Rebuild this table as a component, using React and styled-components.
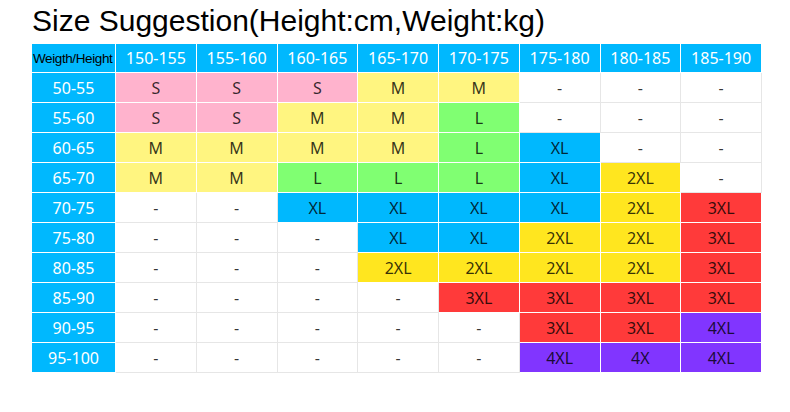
import React from "react";
import styled, { createGlobalStyle } from "styled-components";

const Global = createGlobalStyle`
  html, body { margin: 0; padding: 0; background: #fff; }
  body { width: 790px; height: 412px; overflow: hidden; }
`;

const COLORS = {
  blue: "#00b8fe",
  pink: "#ffb3cd",
  ly: "#fff580",
  green: "#80ff72",
  yellow: "#ffe61f",
  red: "#ff3a3a",
  purple: "#8135ff",
  w: "#ffffff",
};

const Page = styled.div`
  padding: 4px 0 0 32px;
`;

const Title = styled.h1`
  margin: 0;
  height: 33px;
  line-height: 33px;
  font-family: "Liberation Sans", Arial, sans-serif;
  font-weight: normal;
  font-size: 30px;
  color: #000;
  white-space: nowrap;
`;

const Table = styled.div`
  margin-top: 7px;
  width: 730px;
  display: grid;
  grid-template-columns: 84px repeat(8, 1fr);
  grid-template-rows: 29px repeat(10, 30px);
`;

const Cell = styled.div`
  box-sizing: border-box;
  display: flex;
  align-items: center;
  justify-content: center;
  background: ${(p) => COLORS[p.$tone]};
  border-right: 1px solid ${(p) => (p.$tone === "w" ? "#e6e6e6" : "#ffffff")};
  border-bottom: 1px solid ${(p) => (p.$tone === "w" ? "#e6e6e6" : "#ffffff")};
  font-family: "Noto Sans", "Noto Sans CJK SC", sans-serif;
  font-size: 16px;
  color: ${(p) => (p.$light ? "#ffffff" : "rgba(0,0,0,0.8)")};
  white-space: nowrap;
  overflow: visible;
`;

const Corner = styled(Cell)`
  font-family: "Liberation Sans", Arial, sans-serif;
  font-size: 13.5px;
  letter-spacing: -0.4px;
  color: #000;
  justify-content: flex-start;
  padding-left: 1px;
`;

const heights = ["150-155", "155-160", "160-165", "165-170", "170-175", "175-180", "180-185", "185-190"];

const rows = [
  ["50-55", "S S S M M - - -", "pink pink pink ly ly w w w"],
  ["55-60", "S S M M L - - -", "pink pink ly ly green w w w"],
  ["60-65", "M M M M L XL - -", "ly ly ly ly green blue w w"],
  ["65-70", "M M L L L XL 2XL -", "ly ly green green green blue yellow w"],
  ["70-75", "- - XL XL XL XL 2XL 3XL", "w w blue blue blue blue yellow red"],
  ["75-80", "- - - XL XL 2XL 2XL 3XL", "w w w blue blue yellow yellow red"],
  ["80-85", "- - - 2XL 2XL 2XL 2XL 3XL", "w w w yellow yellow yellow yellow red"],
  ["85-90", "- - - - 3XL 3XL 3XL 3XL", "w w w w red red red red"],
  ["90-95", "- - - - - 3XL 3XL 4XL", "w w w w w red red purple"],
  ["95-100", "- - - - - 4XL 4X 4XL", "w w w w w purple purple purple"],
];

export default function App() {
  return (
    <>
      <Global />
      <Page>
        <Title>Size Suggestion(Height:cm,Weight:kg)</Title>
        <Table>
          <Corner $tone="blue">Weigth/Height</Corner>
          {heights.map((h) => (
            <Cell key={h} $tone="blue" $light>
              {h}
            </Cell>
          ))}
          {rows.map(([label, sizes, tones]) => {
            const s = sizes.split(" ");
            const t = tones.split(" ");
            return (
              <React.Fragment key={label}>
                <Cell $tone="blue" $light>
                  {label}
                </Cell>
                {s.map((v, i) => (
                  <Cell key={i} $tone={t[i]}>
                    {v}
                  </Cell>
                ))}
              </React.Fragment>
            );
          })}
        </Table>
      </Page>
    </>
  );
}
